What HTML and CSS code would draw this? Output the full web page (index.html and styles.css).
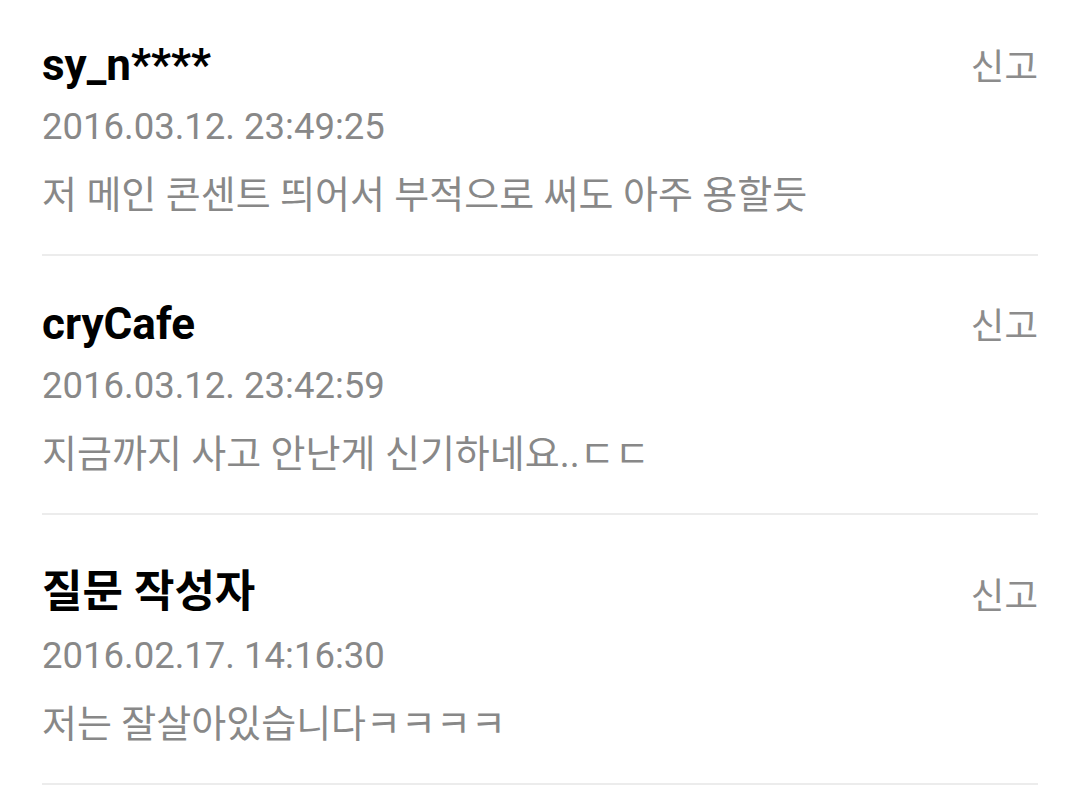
FILE: index.html
```html
<!DOCTYPE html>
<html lang="ko">
<head>
    <meta charset="UTF-8">
    <meta name="viewport" content="width=device-width, initial-scale=1.0">
    <title>댓글</title>
    <link rel="stylesheet" href="styles.css">
</head>
<body>
    <!-- 댓글 목록 -->
    <ul class="comment-list">
        <li class="comment">
            <div class="comment-head">
                <strong class="nick">sy_n****</strong>
                <a class="report" href="#">신고</a>
            </div>
            <div class="date">2016.03.12. 23:49:25</div>
            <p class="text">저 메인 콘센트 띄어서 부적으로 써도 아주 용할듯</p>
        </li>
        <li class="comment">
            <div class="comment-head">
                <strong class="nick">cryCafe</strong>
                <a class="report" href="#">신고</a>
            </div>
            <div class="date">2016.03.12. 23:42:59</div>
            <p class="text">지금까지 사고 안난게 신기하네요..ㄷㄷ</p>
        </li>
        <li class="comment">
            <div class="comment-head">
                <strong class="nick">질문 작성자</strong>
                <a class="report" href="#">신고</a>
            </div>
            <div class="date">2016.02.17. 14:16:30</div>
            <p class="text">저는 잘살아있습니다ㅋㅋㅋㅋ</p>
        </li>
    </ul>
</body>
</html>
```

FILE: styles.css
```css
/* Base page */
body {
    margin: 0;
    background-color: #ffffff;
    font-family: Roboto, "Noto Sans CJK KR", sans-serif;
}

/* Comment list */
.comment-list {
    list-style: none;
    margin: 0;
    padding: 0 42px;
}

.comment {
    padding-top: 41px;
    padding-bottom: 37px;
    border-bottom: 2px solid #ececec;
}

/* list is scrolled a little, first item sits higher */
.comment:first-child {
    padding-top: 38px;
}

/* Nickname + report link on one line */
.comment-head {
    display: flex;
    justify-content: space-between;
    align-items: center;
}

.nick {
    font-size: 44px;
    font-weight: bold;
    color: #000000;
}

.report {
    align-self: flex-end;
    font-size: 36.5px;
    color: #8c8c8c;
    text-decoration: none;
}

/* Date line */
.date {
    margin-top: 14px;
    font-size: 36.5px;
    line-height: 44px;
    color: #888888;
}

/* Comment body */
.text {
    margin: 24px 0 0 0;
    font-size: 38px;
    line-height: 44px;
    color: #888888;
}
```
